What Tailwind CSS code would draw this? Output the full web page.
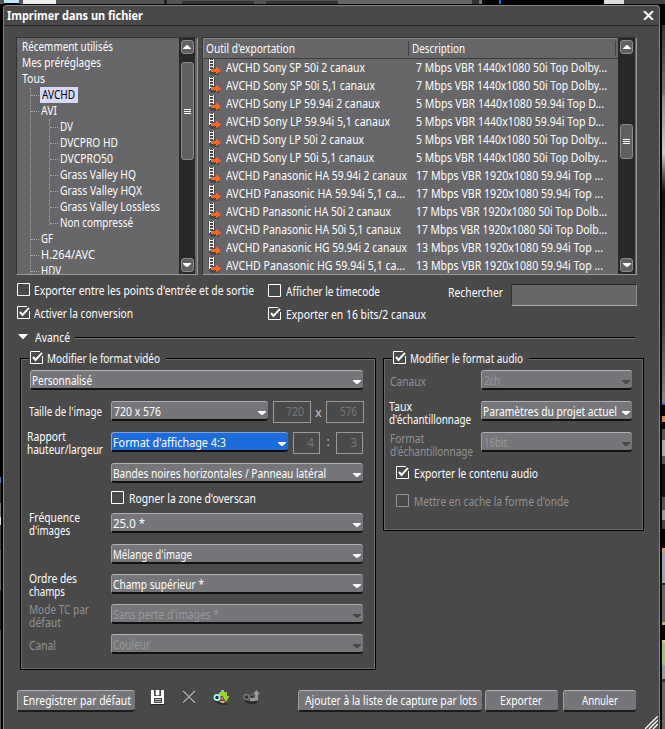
<!DOCTYPE html>
<html lang="fr">
<head>
<meta charset="utf-8">
<title>Imprimer dans un fichier</title>
<script src="https://cdn.jsdelivr.net/npm/@tailwindcss/browser@4"></script>
</head>
<body class="w-[665px] h-[729px] overflow-hidden bg-black">
<svg class="hidden">
  <symbol id="box" viewBox="0 0 13 13"><path d="M.5.5h12v12H.5z" fill="none" stroke="currentColor"/></symbol>
  <symbol id="boxon" viewBox="0 0 13 13"><path d="M10 .5H.5v12h12V5" fill="none" stroke="currentColor"/><path d="M3 6l2.500 3L12 1.800" fill="none" stroke="currentColor" stroke-width="2"/></symbol>
  <symbol id="down" viewBox="0 0 8 4"><path d="M0 0h8v1L4.500 4h-1L0 1z" fill="currentColor"/></symbol>
  <symbol id="up" viewBox="0 0 8 4"><path d="M0 4h8V3.500L4.500 0h-1L0 3.500z" fill="currentColor"/></symbol>
  <symbol id="film" viewBox="0 0 14 17"><path d="M0 0h7v11h4v5H3l-2-3z" fill="#4a4a4c"/><path d="M1.500 0v12M5.500 0v9" stroke="#fff" fill="none"/><path d="M2 1.500h3M2 4.500h3M2 7.500h3M2 10.500h1" stroke="#fff"/><path d="M3 10h5V7.500l5 4-5 4V13H3z" fill="#ff6a22"/></symbol>
</svg>
<div id="app" class="relative w-[665px] h-[729px] flex flex-col text-white text-[12px] leading-[13px] whitespace-nowrap [font-family:'Noto_Sans','Open_Sans',sans-serif]">
  <div class="h-[4px] shrink-0 flex bg-[#555]">
    <div class="w-[4px]"></div><div class="w-[15px] bg-[#bfe6fb] border-b border-black"></div><div class="w-[4px]"></div><div class="w-[33px] bg-[#eee]"></div><div class="w-[108px]"></div><div class="w-[3px] bg-[#222]"></div><div class="w-[15px]"></div><div class="w-[72px] mt-[1px] bg-[#333]"></div><div class="w-[12px]"></div><div class="w-[72px] mt-[1px] bg-[#333]"></div><div class="w-[134px] bg-[#666]"></div><div class="w-[7px] bg-[#333]"></div><div class="w-[3px] bg-[#777]"></div><div class="w-[17px] bg-black"></div><div class="w-[2px] bg-[#1b6fe0]"></div><div class="w-[103px] bg-black"></div><div class="w-[20px] bg-[#ddd]"></div><div class="flex-1 bg-[#444]"></div>
  </div>
  <div class="h-px shrink-0 bg-black"></div>
  <div class="flex h-[724px]">
    <div class="w-[1px] flex flex-col">
      <div class="h-[472px] bg-black"></div><div class="h-[6px] bg-[#5577c0]"></div><div class="h-[20px] bg-[#333]"></div><div class="h-[14px] bg-[#777]"></div><div class="h-[8px] bg-[#ddd]"></div><div class="h-[25px] bg-[#444]"></div><div class="h-[40px] bg-[#666]"></div><div class="h-[40px] bg-[#222]"></div><div class="flex-1 bg-[#555]"></div>
    </div>
    <div class="w-[1px] bg-black"></div>

    <main class="relative w-[657px] h-[724px] shrink-0 border-l border-t border-r border-[#858585] rounded-t-[4px] bg-[#494949] ml-px flex flex-col">
      <header class="h-[20px] shrink-0 border-b border-[#222] flex items-center justify-between pl-[3px] pr-[5px]">
        <span data-w="136" class="font-bold">Imprimer dans un fichier</span>
        <svg class="w-[11px] h-[9px]" viewBox="0 0 11 9"><path d="M1 0l9 9M10 0L1 9" stroke="#fff" stroke-width="2"/></svg>
      </header>

      <section class="flex mt-[11px] ml-[12px] gap-[4px] h-[238px] shrink-0">
        <div class="w-[182px] flex bg-[#67676a] border border-t-[#333] border-l-[#333] border-r-[#999] border-b-[#999]">
          <div class="w-[162px] h-[236px] overflow-hidden pt-[1px] relative" id="tree">
            <div class="absolute left-[13px] top-[50px] h-[186px] border-l border-dotted border-[#aaa]"></div>
            <div class="absolute left-[32px] top-[81px] h-[106px] border-l border-dotted border-[#aaa]"></div>
          </div>
          <div class="w-[16px] bg-[#282828] pt-[2px] pb-[2px] flex flex-col items-center">
            <div class="w-[13px] h-[14px] shrink-0 rounded-[3px] bg-[#606063] border border-[#8c8c8e] flex items-center justify-center"><svg class="w-[8px] h-[4px] shrink-0"><use href="#up"/></svg></div>
            <div class="w-[13px] h-[98px] mt-[8px] shrink-0 rounded-[3px] bg-[#606063] border border-[#8c8c8e] flex flex-col gap-px items-center justify-center"><i class="w-[7px] h-px bg-white"></i><i class="w-[7px] h-px bg-white"></i><i class="w-[7px] h-px bg-white"></i></div>
            <div class="w-[13px] h-[14px] mt-auto shrink-0 rounded-[3px] bg-[#606063] border border-[#8c8c8e] flex items-center justify-center"><svg class="w-[8px] h-[4px] shrink-0"><use href="#down"/></svg></div>
          </div>
        </div>
        <div class="w-[435px] flex bg-[#67676a] border border-t-[#333] border-l-[#333] border-r-[#999] border-b-[#999]">
          <div class="w-[415px] h-[236px] overflow-hidden">
            <div class="h-[21px] border-b border-b-[#3c3c3c] border-t border-l border-t-[#858587] border-l-[#858587] flex items-center">
              <div class="w-[205px] h-[15px] border-r border-[#444] pl-[2px] pt-px"><span data-w="89">Outil d'exportation</span></div>
              <div class="flex-1 h-[15px] pl-[3px] pt-px mr-[2px] border-r border-[#444]"><span data-w="53">Description</span></div>
            </div>
            <div id="rows"></div>
          </div>
          <div class="w-[17px] bg-[#282828] pt-[2px] pb-[2px] flex flex-col items-center">
            <div class="w-[13px] h-[14px] shrink-0 rounded-[3px] bg-[#606063] border border-[#8c8c8e] flex items-center justify-center"><svg class="w-[8px] h-[4px] shrink-0"><use href="#up"/></svg></div>
            <div class="w-[13px] h-[35px] mt-[70px] shrink-0 rounded-[3px] bg-[#606063] border border-[#8c8c8e] flex flex-col gap-px items-center justify-center"><i class="w-[7px] h-px bg-white"></i><i class="w-[7px] h-px bg-white"></i><i class="w-[7px] h-px bg-white"></i></div>
            <div class="w-[13px] h-[14px] mt-auto shrink-0 rounded-[3px] bg-[#606063] border border-[#8c8c8e] flex items-center justify-center"><svg class="w-[8px] h-[4px] shrink-0"><use href="#down"/></svg></div>
          </div>
        </div>
      </section>

      <section class="flex mt-[8px] ml-[13px] h-[44px] shrink-0">
        <div class="w-[251px] flex flex-col gap-[10px]">
          <label class="flex gap-[4px] h-[13px]"><svg class="w-[13px] h-[13px]"><use href="#box"/></svg><span class="pt-px" data-w="220">Exporter entre les points d'entrée et de sortie</span></label>
          <label class="flex gap-[4px] h-[13px]"><svg class="w-[13px] h-[13px]"><use href="#boxon"/></svg><span class="pt-px" data-w="99">Activer la conversion</span></label>
        </div>
        <div class="w-[180px] flex flex-col gap-[10px] pt-px">
          <label class="flex gap-[5px] h-[13px]"><svg class="w-[13px] h-[13px]"><use href="#box"/></svg><span class="pt-px" data-w="94">Afficher le timecode</span></label>
          <label class="flex gap-[5px] h-[13px]"><svg class="w-[13px] h-[13px]"><use href="#boxon"/></svg><span class="pt-px" data-w="140">Exporter en 16 bits/2 canaux</span></label>
        </div>
        <div class="w-[63px] pt-[3px]"><span data-w="55">Rechercher</span></div>
        <div class="w-[126px] h-[22px] mt-px bg-[#67676a] border border-t-[#222] border-l-[#333] border-r-[#8c8c8e] border-b-[#aaa]"></div>
      </section>

      <div class="flex items-center ml-[14px] mt-[4px] h-[13px] shrink-0">
        <svg class="w-[10px] h-[5px] -mt-[2px]" viewBox="0 0 10 5"><path d="M0 0h10L5.500 5h-1z" fill="#fff"/></svg>
        <span data-w="35" class="ml-[7px]">Avancé</span>
        <div class="ml-[5px] w-[560px] h-[2px] bg-black border-b border-[#777]"></div>
      </div>

      <section class="flex gap-[7px] ml-[16px] mt-[14px] h-[312px] shrink-0">
        <div class="w-[356px] h-[312px] border border-black shadow-[inset_0_0_0_1px_#6c6c6c] px-[7px]">
          <label class="flex gap-[4px] h-[13px] w-[137px] -mt-[8px] ml-px relative bg-[#494949] pl-px"><svg class="w-[13px] h-[13px]"><use href="#boxon"/></svg><span class="pt-px" data-w="113">Modifier le format vidéo</span></label>
          <div class="mt-[6px] ml-[2px]" data-sel="333" data-t="Personnalisé" data-tw="60"></div>
          <div class="flex mt-[11px] h-[22px]">
            <div class="w-[83px] pl-px pt-[4px]"><span data-w="73">Taille de l'image</span></div>
            <div data-sel="157" data-t="720 x 576" data-tw="47" data-pad="1"></div>
            <div class="ml-[5px] w-[38px] h-[22px] border border-[#999] text-[#77777a] text-right pr-[6px] pt-[3px]"><span data-w="18">720</span></div>
            <div class="w-[15px] text-center pt-[5px] text-[#ccc]">x</div>
            <div class="w-[38px] h-[22px] border border-[#999] text-[#77777a] text-right pr-[6px] pt-[3px]"><span data-w="17">576</span></div>
          </div>
          <div class="flex mt-[9px] h-[22px]">
            <div class="w-[83px] -mt-[2px] -ml-px mr-px"><div><span data-w="39">Rapport</span></div><div><span data-w="76">hauteur/largeur</span></div></div>
            <div data-sel="177" data-t="Format d'affichage 4:3" data-tw="113" data-blue="1"></div>
            <div class="ml-[5px] w-[27px] h-[22px] border border-[#999] text-[#77777a] text-right pr-[5px] pt-[3px]">4</div>
            <div class="w-[16px] text-center pt-[3px] text-[#ccc]">:</div>
            <div class="w-[27px] h-[22px] border border-[#999] text-[#77777a] text-right pr-[5px] pt-[3px]">3</div>
          </div>
          <div class="mt-[9px] ml-[83px]" data-sel="252" data-t="Bandes noires horizontales / Panneau latéral" data-tw="213"></div>
          <label class="flex gap-[5px] h-[13px] ml-[83px] mt-[8px]"><svg class="w-[13px] h-[13px]"><use href="#box"/></svg><span class="pt-px" data-w="127">Rogner la zone d'overscan</span></label>
          <div class="flex mt-[9px] h-[31px]">
            <div class="w-[83px] pl-px -mt-[2px]"><div><span data-w="51">Fréquence</span></div><div><span data-w="41">d'images</span></div></div>
            <div data-sel="252" data-t="25.0 *" data-tw="32"></div>
          </div>
          <div class="ml-[83px] h-[30px]"><div data-sel="252" data-t="Mélange d'image" data-tw="79"></div></div>
          <div class="flex h-[30px]">
            <div class="w-[83px] pl-px -mt-[2px]"><div><span data-w="48">Ordre des</span></div><div><span data-w="36">champs</span></div></div>
            <div data-sel="252" data-t="Champ supérieur *" data-tw="91"></div>
          </div>
          <div class="flex h-[30px]">
            <div class="w-[83px] pl-px -mt-px text-[#929294]"><div><span data-w="60">Mode TC par</span></div><div><span data-w="32">défaut</span></div></div>
            <div data-sel="252" data-t="Sans perte d'images *" data-tw="106" data-off="1"></div>
          </div>
          <div class="flex h-[20px]">
            <div class="w-[83px] pl-px pt-[5px] text-[#929294]"><span data-w="27">Canal</span></div>
            <div data-sel="252" data-t="Couleur" data-tw="37" data-off="1"></div>
          </div>
        </div>

        <div class="w-[261px] h-[173px] border border-black shadow-[inset_0_0_0_1px_#6c6c6c] pl-[5px]">
          <label class="flex gap-[4px] h-[13px] w-[137px] -mt-[8px] ml-[3px] relative bg-[#494949] pl-px"><svg class="w-[13px] h-[13px]"><use href="#boxon"/></svg><span class="pt-px" data-w="113">Modifier le format audio</span></label>
          <div class="flex mt-[6px] h-[31px]">
            <div class="w-[92px] pl-px pt-[5px] text-[#929294]"><span data-w="36">Canaux</span></div>
            <div data-sel="151" data-t="2ch" data-tw="16" data-off="1" data-pad="1"></div>
          </div>
          <div class="flex h-[31px]">
            <div class="w-[92px] -mt-px"><div><span data-w="23">Taux</span></div><div><span data-w="82">d'échantillonnage</span></div></div>
            <div data-sel="151" data-t="Paramètres du projet actuel" data-tw="134"></div>
          </div>
          <div class="flex h-[34px]">
            <div class="w-[92px] pl-px text-[#929294]"><div><span data-w="34">Format</span></div><div><span data-w="83">d'échantillonnage</span></div></div>
            <div data-sel="151" data-t="16bit" data-tw="23" data-off="1" data-pad="1"></div>
          </div>
          <label class="flex gap-[5px] h-[13px] ml-[7px]"><svg class="w-[13px] h-[13px]"><use href="#boxon"/></svg><span class="pt-px" data-w="124">Exporter le contenu audio</span></label>
          <label class="flex gap-[5px] h-[13px] ml-[7px] mt-[15px] text-[#929294]"><svg class="w-[13px] h-[13px]"><use href="#box"/></svg><span class="pt-px" data-w="155">Mettre en cache la forme d'onde</span></label>
        </div>
      </section>

      <footer class="flex mt-[20px] ml-[13px] h-[22px] shrink-0">
        <button class="w-[118px] h-[22px] rounded-[3px] bg-[#75757a] border-t border-l border-t-[#b0b0b2] border-l-[#a0a0a2] border-b-2 border-b-[#1c1c1c]"><span data-w="108">Enregistrer par défaut</span></button>
        <svg class="ml-[16px] w-[13px] h-[15px]" viewBox="0 0 13 15"><path d="M0 0h13v14H0z" fill="#fff"/><path d="M3 0h7v6H3zM3 8h8v5H3z" fill="#494949"/><path d="M5 0h3v5H5zM4 9.500h6M4 11.500h6" fill="#fff" stroke="#fff" stroke-width=".6"/><path d="M0 14.500h13" stroke="#222"/></svg>
        <svg class="ml-[18px] w-[14px] h-[15px]" viewBox="0 0 14 15"><path d="M1 2l12 12M13 2L1 14" stroke="#222" stroke-width="1.500"/><path d="M1 1l12 12M13 1L1 13" stroke="#aaa" stroke-width="1.600"/></svg>
        <svg class="ml-[17px] w-[17px] h-[15px]" viewBox="0 0 17 15"><path d="M2 11q4 3 8 3h4" stroke="#222" stroke-width="1.500" fill="none"/><path d="M6 3l1-1h7v4h2.500L13 12 9.500 6H6z" fill="#9bd823"/><path d="M8 0h3v2H8z" fill="#7cc4d8"/><circle cx="4" cy="7.500" r="2.600" fill="#222" stroke="#9ff" stroke-width="1.800"/><path d="M7.500 7h3v3h-3z" fill="#c86a3c"/><path d="M7 11h5l-1 2H8z" fill="#f0a888"/></svg>
        <svg class="ml-[13px] w-[18px] h-[15px]" viewBox="0 0 18 15"><path d="M2 11q5 3 12 1" stroke="#222" stroke-width="2" fill="none"/><circle cx="3.500" cy="7" r="2.400" fill="#333" stroke="#777" stroke-width="1.500"/><circle cx="9" cy="7" r="2.200" fill="#333" stroke="#777"/><path d="M7 8h5V4h-2l3.500-4L17 4h-2v6l-3 1H7z" fill="#999"/></svg>
        <button class="ml-[37px] w-[184px] h-[22px] rounded-[3px] bg-[#75757a] border-t border-l border-t-[#b0b0b2] border-l-[#a0a0a2] border-b-2 border-b-[#1c1c1c]"><span data-w="172">Ajouter à la liste de capture par lots</span></button>
        <button class="ml-[3px] w-[73px] h-[22px] rounded-[3px] bg-[#75757a] border-t border-l border-t-[#b0b0b2] border-l-[#a0a0a2] border-b-2 border-b-[#1c1c1c] pr-[3px]"><span data-w="42">Exporter</span></button>
        <button class="ml-[5px] w-[73px] h-[22px] rounded-[3px] bg-[#75757a] border-t border-l border-t-[#b0b0b2] border-l-[#a0a0a2] border-b-2 border-b-[#1c1c1c]"><span data-w="36">Annuler</span></button>
      </footer>
      <svg class="absolute right-[1px] bottom-0 w-[13px] h-[13px]" viewBox="0 0 13 13"><path d="M0 13L13 0M4 13l9-9M8 13l5-5" stroke="#fff" stroke-width="1.300"/></svg>
    </main>

    <div class="w-[2px] bg-black"></div>
    <div class="flex-1 flex flex-col">
      <div class="h-[20px] bg-black"></div><div class="h-[70px] bg-gradient-to-b from-[#333] to-[#777]"></div><div class="h-[58px] bg-gradient-to-b from-[#888] to-[#ccc]"></div><div class="h-[40px] bg-gradient-to-b from-[#ccc] to-[#111]"></div><div class="h-[130px] bg-gradient-to-b from-[#111] to-[#444]"></div><div class="h-[80px] bg-gradient-to-b from-[#444] to-[#888]"></div>
      <div class="h-[2px] bg-[#1b6fe0]"></div><div class="h-[11px] bg-black"></div><div class="h-[6px] bg-[#d98b3a]"></div><div class="h-[7px] bg-black"></div><div class="h-[11px] bg-[#555]"></div><div class="h-[16px] bg-[#aaa]"></div><div class="h-[8px] bg-[#555]"></div><div class="h-[33px] bg-[#111]"></div><div class="h-[13px] bg-[#555]"></div><div class="h-[10px] bg-[#999]"></div><div class="h-[9px] bg-[#444]"></div><div class="h-[19px] bg-black"></div><div class="h-[3px] bg-[#f0a020]"></div><div class="h-[32px] bg-[#9aa5b5]"></div><div class="h-[2px] bg-[#222]"></div><div class="h-[37px] bg-[#666]"></div><div class="h-[3px] bg-[#c0b060]"></div><div class="h-[15px] bg-black"></div><div class="h-[3px] bg-[#d8c878]"></div><div class="h-[22px] bg-[#98c860]"></div><div class="h-[14px] bg-[#999]"></div><div class="h-[3px] bg-[#333]"></div><div class="flex-1 bg-[#666]"></div>
    </div>
  </div>
</div>
<script>
// Export presets: name, name width, bitrate/format, description width
const presets = [
  ["AVCHD Sony SP 50i 2 canaux", 139, "7 Mbps VBR 1440x1080 50i Top Dolby...", 191],
  ["AVCHD Sony SP 50i 5,1 canaux", 149, "7 Mbps VBR 1440x1080 50i Top Dolby...", 191],
  ["AVCHD Sony LP 59.94i 2 canaux", 154, "5 Mbps VBR 1440x1080 59.94i Top D...", 188],
  ["AVCHD Sony LP 59.94i 5,1 canaux", 164, "5 Mbps VBR 1440x1080 59.94i Top D...", 188],
  ["AVCHD Sony LP 50i 2 canaux", 138, "5 Mbps VBR 1440x1080 50i Top Dolby...", 191],
  ["AVCHD Sony LP 50i 5,1 canaux", 148, "5 Mbps VBR 1440x1080 50i Top Dolby...", 191],
  ["AVCHD Panasonic HA 59.94i 2 canaux", 181, "17 Mbps VBR 1920x1080 59.94i Top ...", 187],
  ["AVCHD Panasonic HA 59.94i 5,1 ca...", 179, "17 Mbps VBR 1920x1080 59.94i Top ...", 187],
  ["AVCHD Panasonic HA 50i 2 canaux", 165, "17 Mbps VBR 1920x1080 50i Top Dolb...", 191],
  ["AVCHD Panasonic HA 50i 5,1 canaux", 175, "17 Mbps VBR 1920x1080 50i Top Dolb...", 191],
  ["AVCHD Panasonic HG 59.94i 2 canaux", 181, "13 Mbps VBR 1920x1080 59.94i Top ...", 187],
  ["AVCHD Panasonic HG 59.94i 5,1 ca...", 179, "13 Mbps VBR 1920x1080 59.94i Top ...", 187]
];
document.getElementById("rows").innerHTML = presets.map(([n, nw, d, dw]) =>
  `<div class="h-[18px] flex"><svg class="w-[14px] h-[17px] ml-[5px] mr-[4px]"><use href="#film"/></svg><div class="w-[190px] pt-[2px]"><span data-w="${nw}">${n}</span></div><div class="pt-[2px]"><span data-w="${dw}">${d}</span></div></div>`).join("");

// Folder tree: level, label, label width
const nodes = [[0,"Récemment utilisés",91],[0,"Mes préréglages",79],[0,"Tous",23],[1,"AVCHD",33],[1,"AVI",16],[2,"DV",13],[2,"DVCPRO HD",58],[2,"DVCPRO50",53],[2,"Grass Valley HQ",76],[2,"Grass Valley HQX",82],[2,"Grass Valley Lossless",100],[2,"Non compressé",73],[1,"GF",12],[1,"H.264/AVC",54],[1,"HDV",20]];
const indent = ["pl-[5px]", "pl-[14px]", "pl-[33px]"];
document.getElementById("tree").insertAdjacentHTML("beforeend", nodes.map(([l, t, w]) =>
  `<div class="h-[16px] flex items-center ${indent[l]}">${l ? '<i class="w-[8px] border-t border-dotted border-[#aaa] mr-px"></i>' : ''}<span class="${t === "AVCHD" ? "bg-[#d9d9fa] text-black h-[16px] w-[38px] pl-[2px] pt-px" : l ? "pl-px pb-px" : "pb-px"}"><span data-w="${w}">${t}</span></span></div>`).join(""));

// Drop-down fields
document.querySelectorAll("[data-sel]").forEach(e => {
  const s = e.dataset;
  const tone = s.blue ? "bg-[#1d6cdb] border-t-[#7aa4e0] border-l-[#7aa4e0] text-white" : s.off ? "bg-[#75757a] border-t-[#b0b0b2] border-l-[#a0a0a2] text-[#98989b]" : "bg-[#75757a] border-t-[#b0b0b2] border-l-[#a0a0a2] text-white";
  e.innerHTML = `<div class="h-[20px] flex justify-between rounded-[3px] border-t border-l border-b-2 border-b-[#111] pr-[2px] ${s.pad ? "pl-[2px]" : "pl-[1px]"} ${tone}" style="width:${s.sel}px"><span class="pt-[3px]" data-w="${s.tw}">${s.t}</span><svg class="w-[8px] h-[4px] mt-[9px] shrink-0 ${s.off ? "text-[#48484a]" : "text-white"}"><use href="#down"/></svg></div>`;
});

// Condense each label to its own width
const pen = document.createElement("canvas").getContext("2d");
document.querySelectorAll("[data-w]").forEach(e => {
  pen.font = `${e.classList.contains("font-bold") ? "bold " : ""}12px "Noto Sans"`;
  const k = e.dataset.w / pen.measureText(e.textContent).width;
  e.style.cssText = `display:inline-block;vertical-align:top;flex:none;width:${e.dataset.w}px;text-align:left;transform-origin:0 0;transform:scaleX(${k})`;
});
</script>
</body>
</html>
